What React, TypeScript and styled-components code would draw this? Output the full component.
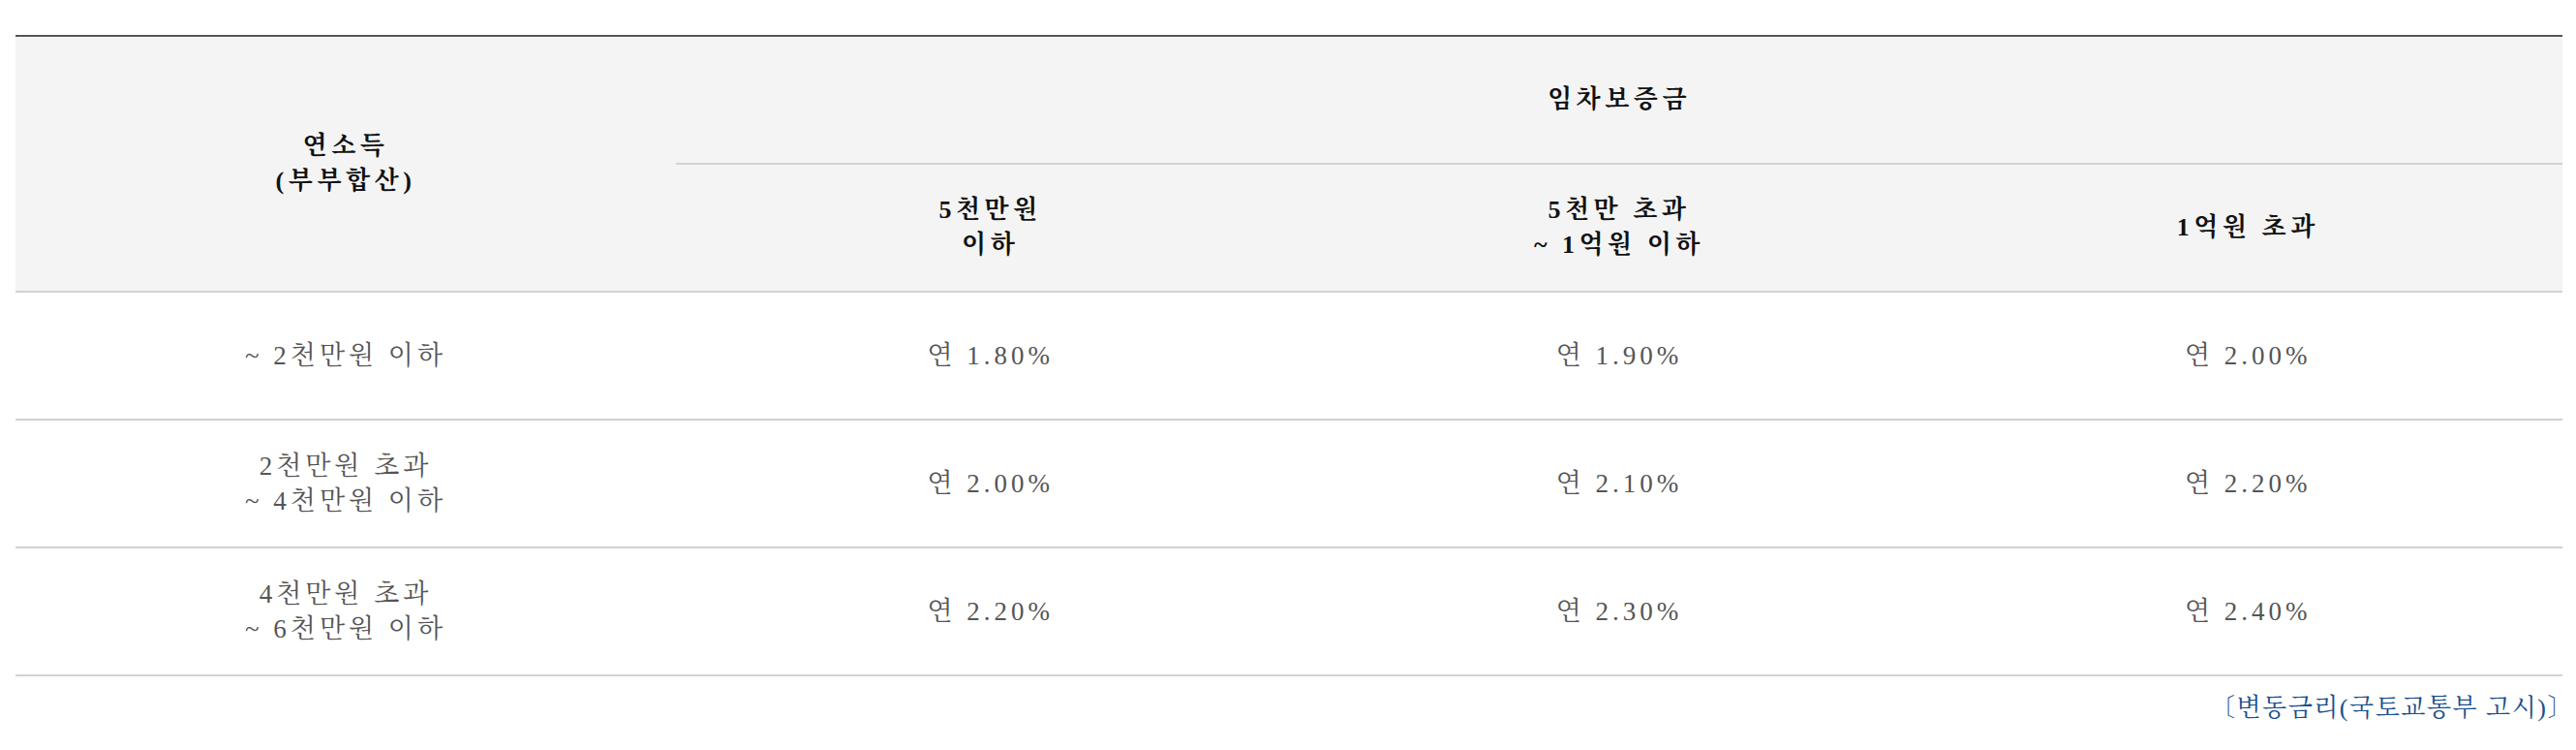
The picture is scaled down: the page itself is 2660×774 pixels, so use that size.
import React from "react";
import styled, { createGlobalStyle } from "styled-components";

const Global = createGlobalStyle`
  html, body { margin: 0; padding: 0; background: #fff; }
  body { font-family: "Liberation Serif", "Noto Serif CJK KR", "Noto Sans CJK KR", serif; }
`;

const Wrap = styled.div`
  padding: 36px 14px 0 16px;
`;

const Table = styled.table`
  width: 100%;
  border-collapse: collapse;
  table-layout: fixed;
  border-top: 2px solid #555;
`;

const HeadCell = styled.th`
  background: #f4f4f4;
  color: #111;
  font-weight: bold;
  font-size: 26px;
  line-height: 36px;
  letter-spacing: 4.5px;
  height: 130px;
  padding: 0;
  text-align: center;
  vertical-align: middle;
  border-bottom: 2px solid #d2d2d2;
`;

const BodyCell = styled.td`
  color: #555;
  font-size: 27px;
  line-height: 36px;
  letter-spacing: 4px;
  height: 130px;
  padding: 0;
  text-align: center;
  vertical-align: middle;
  border-bottom: 2px solid #d2d2d2;
`;

const Note = styled.p`
  margin: 0 -12px 0 0;
  padding-top: 15px;
  text-align: right;
  color: #1a4f8b;
  font-size: 26px;
  line-height: 36px;
  letter-spacing: 1.5px;
`;

const rows: [React.ReactNode, string, string, string][] = [
  ["~ 2천만원 이하", "연 1.80%", "연 1.90%", "연 2.00%"],
  [<>2천만원 초과<br />~ 4천만원 이하</>, "연 2.00%", "연 2.10%", "연 2.20%"],
  [<>4천만원 초과<br />~ 6천만원 이하</>, "연 2.20%", "연 2.30%", "연 2.40%"],
];

export default function App() {
  return (
    <Wrap>
      <Global />
      <Table>
        <colgroup>
          <col style={{ width: 682 }} />
          <col />
          <col />
          <col />
        </colgroup>
        <thead>
          <tr>
            <HeadCell rowSpan={2}>연소득<br />(부부합산)</HeadCell>
            <HeadCell colSpan={3}>임차보증금</HeadCell>
          </tr>
          <tr>
            <HeadCell>5천만원<br />이하</HeadCell>
            <HeadCell>5천만 초과<br />~ 1억원 이하</HeadCell>
            <HeadCell>1억원 초과</HeadCell>
          </tr>
        </thead>
        <tbody>
          {rows.map((r, i) => (
            <tr key={i}>
              <BodyCell>{r[0]}</BodyCell>
              <BodyCell>{r[1]}</BodyCell>
              <BodyCell>{r[2]}</BodyCell>
              <BodyCell>{r[3]}</BodyCell>
            </tr>
          ))}
        </tbody>
      </Table>
      <Note>〔변동금리(국토교통부 고시)〕</Note>
    </Wrap>
  );
}
